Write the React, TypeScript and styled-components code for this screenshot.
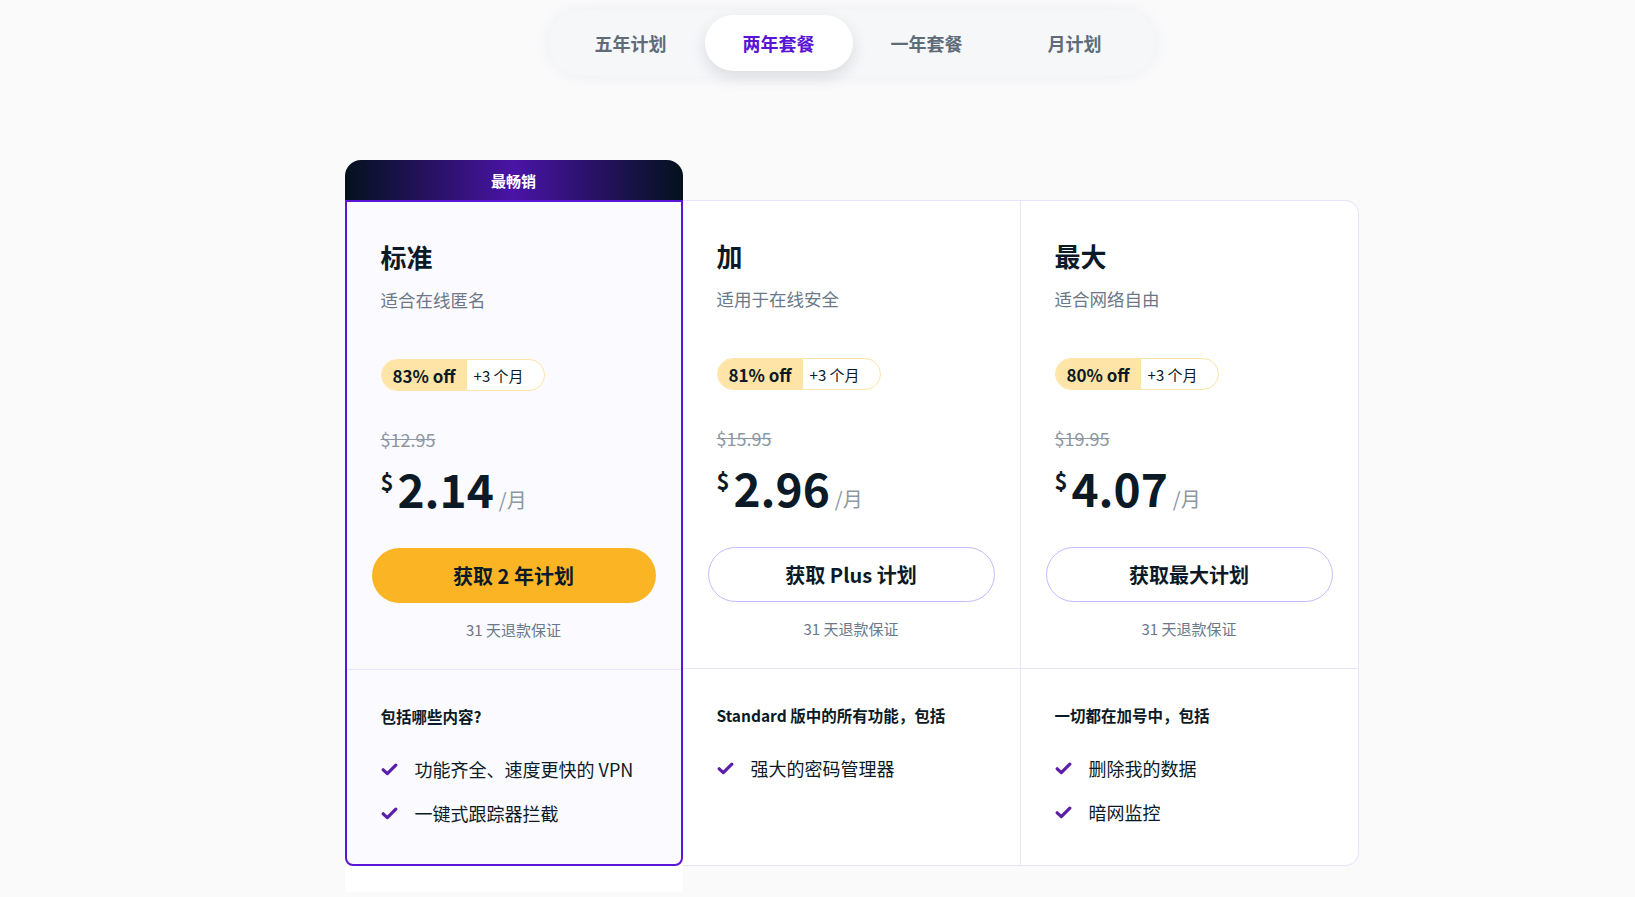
import React, { useState } from 'react';
import styled, { createGlobalStyle } from 'styled-components';

const GlobalStyle = createGlobalStyle`
  html, body {
    margin: 0;
    padding: 0;
    background: #fafafb;
    font-family: "Noto Sans CJK SC", "Noto Sans", sans-serif;
    color: #0b1a26;
  }
  * {
    box-sizing: border-box;
  }
`;

const Page = styled.div`
  min-height: 897px;
  padding: 10px 0 0 68px;
  display: flex;
  flex-direction: column;
  align-items: center;
`;

const TabBar = styled.div`
  display: flex;
  padding: 5px 6px 5px 8px;
  background: #f5f7f9;
  border-radius: 999px;
  box-shadow: 0 0 14px rgba(230, 232, 238, 0.6);
`;

const Tab = styled.button<{ $active?: boolean }>`
  width: 148px;
  height: 56px;
  border: none;
  border-radius: 999px;
  font-family: inherit;
  font-size: 18px;
  font-weight: 700;
  cursor: pointer;
  color: ${(p) => (p.$active ? '#5a14d6' : '#5f6b79')};
  background: ${(p) => (p.$active ? '#ffffff' : 'transparent')};
  box-shadow: ${(p) => (p.$active ? '0 6px 16px rgba(24, 24, 48, 0.12)' : 'none')};
`;

const Plans = styled.div`
  margin-top: 84px;
  width: 1014px;
`;

const BadgeRow = styled.div`
  display: grid;
  grid-template-columns: repeat(3, 1fr);
`;

const BestSeller = styled.div`
  height: 40px;
  border-radius: 16px 16px 0 0;
  background: linear-gradient(90deg, #03111c 0%, #2d1270 30%, #4a14a6 50%, #2d1270 70%, #03111c 100%);
  color: #ffffff;
  font-size: 15px;
  font-weight: 700;
  display: flex;
  align-items: center;
  justify-content: center;
`;

const Grid = styled.div`
  display: grid;
  grid-template-columns: repeat(3, 1fr);
`;

const Column = styled.div<{ $featured?: boolean; $last?: boolean }>`
  display: flex;
  flex-direction: column;
  background: ${(p) => (p.$featured ? '#fbfaff' : '#ffffff')};
  border: ${(p) => (p.$featured ? '2px solid #5a15d6' : '1px solid #e7e4fb')};
  border-left: ${(p) => (p.$featured ? '2px solid #5a15d6' : 'none')};
  border-radius: ${(p) => (p.$featured ? '0 0 8px 8px' : p.$last ? '0 14px 14px 0' : '0')};
`;

const Top = styled.div`
  padding: 38px 34px 28px;
  border-bottom: 1px solid #e7e4fb;
  display: flex;
  flex-direction: column;
`;

const Title = styled.h2`
  margin: 0;
  font-size: 26px;
  line-height: 34px;
  font-weight: 700;
`;

const Subtitle = styled.div`
  margin-top: 13px;
  font-size: 17.5px;
  line-height: 26px;
  color: #6b7888;
`;

const Discount = styled.div`
  margin-top: 46px;
  align-self: flex-start;
  display: flex;
  height: 32px;
  border: 1px solid #fde4a8;
  border-radius: 999px;
  overflow: hidden;
  background: #ffffff;
`;

const Off = styled.span`
  display: flex;
  align-items: center;
  padding: 0 11px;
  background: #fee4a6;
  font-size: 17px;
  font-weight: 700;
`;

const Extra = styled.span`
  display: flex;
  align-items: center;
  padding: 0 20px 0 7px;
  font-size: 15px;
`;

const OldPrice = styled.div`
  margin-top: 36px;
  font-size: 18px;
  line-height: 24px;
  color: #8c97a3;
  text-decoration: line-through;
`;

const PriceRow = styled.div`
  margin-top: 8px;
  display: flex;
  align-items: baseline;
  height: 58px;
`;

const Currency = styled.span`
  font-size: 22px;
  font-weight: 700;
  align-self: flex-start;
  margin-top: 6px;
  margin-right: 4px;
`;

const Amount = styled.span`
  font-size: 46px;
  line-height: 58px;
  font-weight: 700;
`;

const Per = styled.span`
  margin-left: 5px;
  font-size: 20px;
  color: #8c97a3;
`;

const CTA = styled.button<{ $primary?: boolean }>`
  margin: 31px -9px 0;
  height: 55px;
  border-radius: 999px;
  font-family: inherit;
  font-size: 20px;
  font-weight: 700;
  color: #0b1a26;
  cursor: pointer;
  background: ${(p) => (p.$primary ? '#fbb524' : '#ffffff')};
  border: ${(p) => (p.$primary ? 'none' : '1.5px solid #c6baff')};
`;

const Guarantee = styled.div`
  margin-top: 16px;
  text-align: center;
  font-size: 15px;
  line-height: 22px;
  color: #6b7888;
`;

const Features = styled.div`
  padding: 35px 34px 38px;
  display: flex;
  flex-direction: column;
  gap: 18px;
`;

const FeatureHead = styled.div`
  font-size: 15.5px;
  line-height: 22px;
  font-weight: 700;
  margin-bottom: 11px;
`;

const Item = styled.div`
  display: flex;
  align-items: center;
  gap: 17px;
  font-size: 18px;
  line-height: 26px;
`;

const Below = styled.div`
  width: 338px;
  height: 26px;
  background: #ffffff;
`;

const Check = () => (
  <svg width="17" height="13" viewBox="0 0 17 13">
    <path d="M2.2 6.8 L6.3 10.6 L14.8 2.2" fill="none" stroke="#5b1ea8" strokeWidth="3.2" strokeLinecap="round" strokeLinejoin="round" />
  </svg>
);

interface Plan {
  name: string;
  desc: string;
  off: string;
  old: string;
  price: string;
  cta: string;
  head: string;
  items: string[];
}

const plans: Plan[] = [
  {
    name: '标准',
    desc: '适合在线匿名',
    off: '83% off',
    old: '$12.95',
    price: '2.14',
    cta: '获取 2 年计划',
    head: '包括哪些内容?',
    items: ['功能齐全、速度更快的 VPN', '一键式跟踪器拦截'],
  },
  {
    name: '加',
    desc: '适用于在线安全',
    off: '81% off',
    old: '$15.95',
    price: '2.96',
    cta: '获取 Plus 计划',
    head: 'Standard 版中的所有功能，包括',
    items: ['强大的密码管理器'],
  },
  {
    name: '最大',
    desc: '适合网络自由',
    off: '80% off',
    old: '$19.95',
    price: '4.07',
    cta: '获取最大计划',
    head: '一切都在加号中，包括',
    items: ['删除我的数据', '暗网监控'],
  },
];

const tabs = ['五年计划', '两年套餐', '一年套餐', '月计划'];

export default function App() {
  const [active, setActive] = useState(1);
  return (
    <Page>
      <GlobalStyle />
      <TabBar>
        {tabs.map((t, i) => (
          <Tab key={t} $active={i === active} onClick={() => setActive(i)}>
            {t}
          </Tab>
        ))}
      </TabBar>
      <Plans>
        <BadgeRow>
          <BestSeller>最畅销</BestSeller>
        </BadgeRow>
        <Grid>
          {plans.map((p, i) => (
            <Column key={p.name} $featured={i === 0} $last={i === plans.length - 1}>
              <Top>
                <Title>{p.name}</Title>
                <Subtitle>{p.desc}</Subtitle>
                <Discount>
                  <Off>{p.off}</Off>
                  <Extra>+3 个月</Extra>
                </Discount>
                <OldPrice>{p.old}</OldPrice>
                <PriceRow>
                  <Currency>$</Currency>
                  <Amount>{p.price}</Amount>
                  <Per>/月</Per>
                </PriceRow>
                <CTA $primary={i === 0}>{p.cta}</CTA>
                <Guarantee>31 天退款保证</Guarantee>
              </Top>
              <Features>
                <FeatureHead>{p.head}</FeatureHead>
                {p.items.map((it) => (
                  <Item key={it}>
                    <Check />
                    {it}
                  </Item>
                ))}
              </Features>
            </Column>
          ))}
        </Grid>
        <Below />
      </Plans>
    </Page>
  );
}
